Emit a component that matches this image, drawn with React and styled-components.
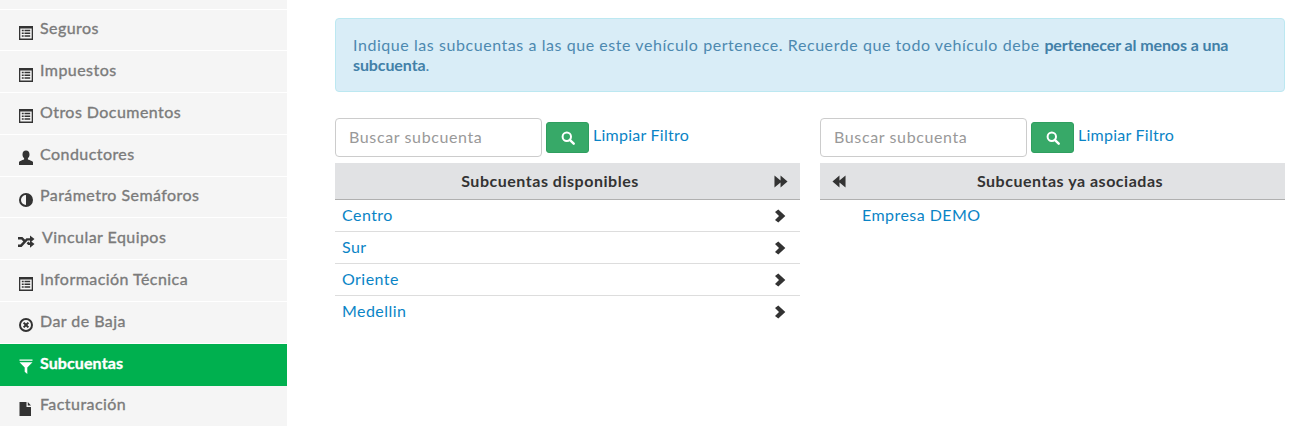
import React from 'react';
import styled, { createGlobalStyle } from 'styled-components';

const SIDEBAR_ITEMS = [
  { label: 'Seguros', icon: 'list' },
  { label: 'Impuestos', icon: 'list' },
  { label: 'Otros Documentos', icon: 'list' },
  { label: 'Conductores', icon: 'user' },
  { label: 'Parámetro Semáforos', icon: 'adjust' },
  { label: 'Vincular Equipos', icon: 'random' },
  { label: 'Información Técnica', icon: 'list' },
  { label: 'Dar de Baja', icon: 'remove' },
  { label: 'Subcuentas', icon: 'filter', active: true },
  { label: 'Facturación', icon: 'file' },
];

const ICONS = {
  list: (
    <path
      fillRule="evenodd"
      d="M0 1h14v14H0zM1.300 3.500v10h11.400v-10zM2.800 4.800h1.900v1.500H2.800zM5.500 4.800h5.700v1.500H5.500zM2.800 7.500h1.900V9H2.800zM5.500 7.500h5.700V9H5.500zM2.800 10.200h1.900v1.500H2.800zM5.500 10.200h5.700v1.500H5.500z"
    />
  ),
  user: <path d="M7 .5c2.200 0 3.500 1.600 3.500 4 0 1.600-.7 3-1.600 3.800v1.100c2.100.7 4.500 1.500 5.100 2.700V15H0v-2.900c.6-1.200 3-2 5.100-2.700V8.300C4.200 7.500 3.500 6.100 3.500 4.500c0-2.400 1.300-4 3.500-4z" />,
  adjust: (
    <path
      fillRule="evenodd"
      d="M7 1a7 7 0 1 1 0 14A7 7 0 0 1 7 1zm0 2a5 5 0 0 0 0 10z"
    />
  ),
  random: (
    <path d="M-1 3h4.400l3 3-1.800 1.800-2.200-2.300H-1zM-1 10.500h2.400l6-6.300H11V1.500l4.500 3.600L11 8.700V6.600H8.600l-6 6.400H-1zM7.600 9.300l1.800-1.800.8 1h.8V6.500l4.500 3.600L11 13.700V11H9.100z" />
  ),
  remove: (
    <path
      fillRule="evenodd"
      d="M7 1a7 7 0 1 1 0 14A7 7 0 0 1 7 1zm0 2a5 5 0 1 0 0 10A5 5 0 0 0 7 3zM5.300 4.900L7 6.600l1.700-1.700 1.400 1.400L8.400 8l1.700 1.700-1.400 1.400L7 9.400l-1.700 1.700-1.400-1.400L5.600 8 3.900 6.300z"
    />
  ),
  filter: <path d="M.5 .5h13v1.300H.5zM.5 3.200h13L8.300 8.500V15l-2.600-2.200V8.500z" />,
  file: <path d="M.5 1H7.500v5H12v9H.5zM8.800 1L12 4.500H8.800z" />,
};

const Icon = ({ name }) => (
  <IconSvg viewBox="0 0 15 15" aria-hidden="true">
    {ICONS[name]}
  </IconSvg>
);

const SearchBox = () => (
  <SearchRow>
    <SearchInput placeholder="Buscar subcuenta" />
    <SearchButton type="button" aria-label="Buscar">
      <svg width="14" height="14" viewBox="0 0 14 14">
        <circle cx="5.800" cy="5.800" r="4.200" fill="none" stroke="#fff" strokeWidth="2" />
        <path d="M8.800 8.800l3.900 3.900" stroke="#fff" strokeWidth="2.400" strokeLinecap="round" />
      </svg>
    </SearchButton>
    <ClearLink href="#">Limpiar Filtro</ClearLink>
  </SearchRow>
);

const Chevron = () => (
  <ArrowSvg width="12" height="14" viewBox="0 0 12 14">
    <path d="M4.300 .5L11.300 7l-7 6.500L1 11l4-4-4-4z" />
  </ArrowSvg>
);

const Forward = () => (
  <ArrowSvg width="14" height="13" viewBox="0 0 15 13">
    <path d="M.5 0L7 5.300V0l7.500 6.500L7 13V7.700L.5 13z" />
  </ArrowSvg>
);

const Backward = () => (
  <ArrowSvg width="14" height="13" viewBox="0 0 15 13">
    <path d="M14.500 0L8 5.300V0L.5 6.500 8 13V7.700l6.500 5.300z" />
  </ArrowSvg>
);

const App = () => {
  return (
    <Page>
      <GlobalStyle />
      <Sidebar>
        <SidebarStub />
        {SIDEBAR_ITEMS.map(item => (
          <SidebarItem key={item.label} $active={item.active}>
            <Icon name={item.icon} />
            <SidebarLabel $active={item.active} $shift={item.icon === 'random'}>
              {item.label}
            </SidebarLabel>
          </SidebarItem>
        ))}
      </Sidebar>
      <Main>
        <Alert>
          Indique las subcuentas a las que este vehículo pertenece. Recuerde que todo vehículo debe{' '}
          <strong>pertenecer al menos a una subcuenta</strong>.
        </Alert>
        <Columns>
          <Column>
            <SearchBox />
            <ListHeader>
              <HeaderTitle>Subcuentas disponibles</HeaderTitle>
              <HeaderAction $side="right">
                <Forward />
              </HeaderAction>
            </ListHeader>
            {['Centro', 'Sur', 'Oriente', 'Medellin'].map(name => (
              <ListRow key={name}>
                <RowLink href="#">{name}</RowLink>
                <Chevron />
              </ListRow>
            ))}
          </Column>
          <Column>
            <SearchBox />
            <ListHeader>
              <HeaderAction $side="left">
                <Backward />
              </HeaderAction>
              <HeaderTitle>Subcuentas ya asociadas</HeaderTitle>
            </ListHeader>
            <AssociatedRow>
              <RowLink href="#">Empresa DEMO</RowLink>
            </AssociatedRow>
          </Column>
        </Columns>
      </Main>
    </Page>
  );
};

const GlobalStyle = createGlobalStyle`
  html, body {
    margin: 0;
    padding: 0;
    background: #fff;
    font-family: 'Lato', sans-serif;
  }
`;

const Page = styled.div`
  display: flex;
  width: 1292px;
  height: 429px;
  overflow: hidden;
`;

const Sidebar = styled.nav`
  flex: 0 0 287px;
  display: flex;
  flex-direction: column;
  height: 426px;
  overflow: hidden;
  background: #f5f5f5;
`;

const SidebarStub = styled.div`
  flex: 0 0 9.500px;
  box-sizing: border-box;
  border-bottom: 1px solid #fff;
`;

const SidebarItem = styled.div`
  flex: 0 0 41.800px;
  box-sizing: border-box;
  display: flex;
  align-items: center;
  padding-left: 19px;
  color: ${props => (props.$active ? '#fff' : '#333')};
  background: ${props => (props.$active ? '#00b04f' : 'transparent')};
  border-bottom: 1px solid ${props => (props.$active ? '#00b04f' : '#fff')};
`;

const IconSvg = styled.svg`
  width: 15px;
  height: 15px;
  flex: none;
  margin-top: 5px;
  overflow: visible;
  fill: currentColor;
`;

const SidebarLabel = styled.span`
  margin-left: ${props => (props.$shift ? '8px' : '6px')};
  margin-top: -3.500px;
  font-size: 16px;
  line-height: 20px;
  letter-spacing: ${props => (props.$active ? '0.1px' : '0.45px')};
  font-weight: ${props => (props.$active ? 700 : 400)};
  color: ${props => (props.$active ? '#fff' : '#7b7b7b')};
  -webkit-text-stroke: 0.35px currentColor;
`;

const Main = styled.main`
  flex: 1;
  padding: 18px 7px 0 48px;
`;

const Alert = styled.div`
  box-sizing: border-box;
  height: 74px;
  padding: 16px 17px;
  border: 1px solid #bce8f1;
  border-radius: 4px;
  background: #d9edf7;
  color: #4d89b0;
  font-size: 16px;
  line-height: 20px;
  letter-spacing: 0.56px;

  strong {
    font-weight: 700;
    color: #4280a8;
    letter-spacing: -0.1px;
  }
`;

const Columns = styled.div`
  display: grid;
  grid-template-columns: 465px 465px;
  column-gap: 20px;
  margin-top: 26px;
`;

const Column = styled.section`
  min-width: 0;
`;

const SearchRow = styled.div`
  display: flex;
  align-items: flex-start;
  height: 45px;
`;

const SearchInput = styled.input`
  box-sizing: border-box;
  width: 207px;
  height: 39px;
  padding: 0 13px 2px;
  border: 1px solid #ccc;
  border-radius: 4px;
  outline: none;
  font-family: inherit;
  font-size: 16px;
  letter-spacing: 0.62px;
  color: #555;

  &::placeholder {
    color: #999;
    opacity: 1;
  }
`;

const SearchButton = styled.button`
  display: flex;
  align-items: center;
  justify-content: center;
  box-sizing: border-box;
  width: 43px;
  height: 31px;
  margin: 4px 4px 0 4px;
  padding: 0;
  border: 1px solid #2f9e5f;
  border-radius: 3px;
  background: #37a968;
`;

const ClearLink = styled.a`
  margin-top: 7px;
  font-size: 16px;
  line-height: 20px;
  letter-spacing: 0.25px;
  color: #0a84c6;
  text-decoration: none;
`;

const ListHeader = styled.div`
  box-sizing: border-box;
  display: flex;
  align-items: center;
  height: 37px;
  border-bottom: 1px solid #b0b0b0;
  background: #e1e2e4;
`;

const HeaderTitle = styled.span`
  flex: 1;
  margin-top: -2px;
  text-align: center;
  font-size: 16px;
  font-weight: 700;
  letter-spacing: 0.52px;
  color: #333;
`;

const HeaderAction = styled.span`
  flex: 0 0 35px;
  box-sizing: border-box;
  display: flex;
  justify-content: center;
  padding-top: 1px;
  ${props => (props.$side === 'right' ? 'padding-right: 3px;' : 'padding-left: 2px;')}
`;

const ArrowSvg = styled.svg`
  display: block;
  fill: #333;
`;

const ListRow = styled.div`
  box-sizing: border-box;
  display: flex;
  align-items: center;
  justify-content: space-between;
  height: 32px;
  padding: 0 14px 0 7px;
  border-bottom: 1px solid #ddd;

  &:last-child {
    border-bottom-color: transparent;
  }
`;

const AssociatedRow = styled.div`
  box-sizing: border-box;
  display: flex;
  align-items: center;
  height: 32px;
  padding-left: 42px;
  border-bottom: 1px solid transparent;
`;

const RowLink = styled.a`
  margin-top: -2px;
  font-size: 16px;
  letter-spacing: 0.45px;
  color: #0a84c6;
  text-decoration: none;
`;

export default App;
